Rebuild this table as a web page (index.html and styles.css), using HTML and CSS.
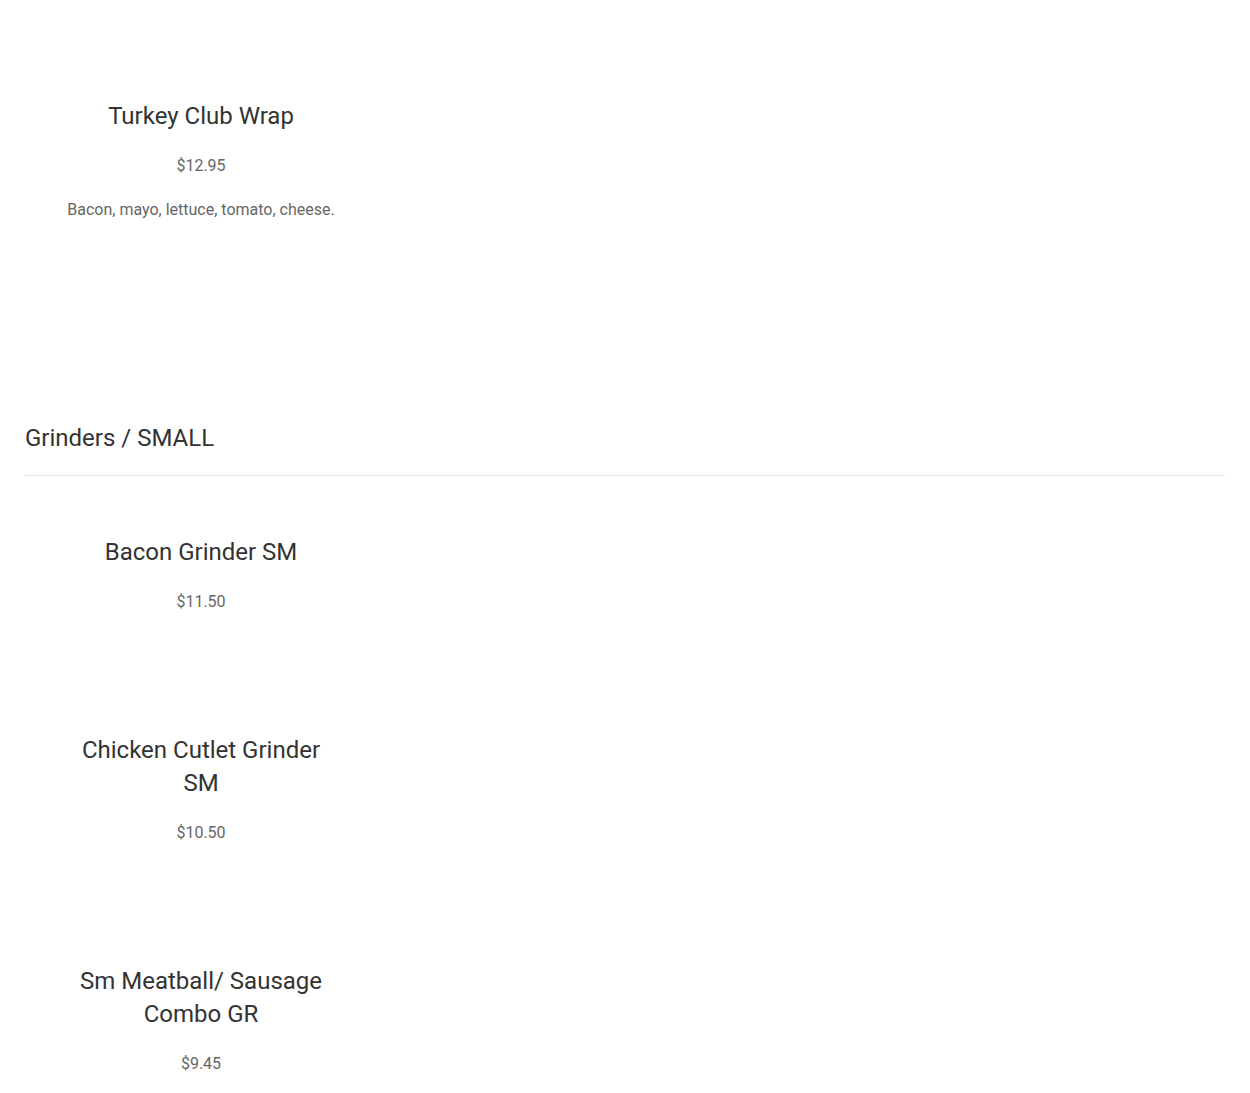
FILE: index.html
```html
<!DOCTYPE html>
<html lang="en">
<head>
  <meta charset="UTF-8">
  <meta name="viewport" content="width=device-width, initial-scale=1.0">
  <title>Menu</title>
  <link rel="stylesheet" href="styles.css">
</head>
<body>
  <div class="menu">
    <div class="section first">
      <div class="items">
        <div class="item">
          <h3 class="item-name">Turkey Club Wrap</h3>
          <div class="item-price">$12.95</div>
          <p class="item-desc">Bacon, mayo, lettuce, tomato, cheese.</p>
        </div>
      </div>
    </div>

    <div class="section">
      <h2 class="section-title">Grinders / SMALL</h2>
      <div class="items">
        <div class="item">
          <h3 class="item-name">Bacon Grinder SM</h3>
          <div class="item-price">$11.50</div>
        </div>
        <div class="item">
          <h3 class="item-name">Chicken Cutlet Grinder SM</h3>
          <div class="item-price">$10.50</div>
        </div>
        <div class="item">
          <h3 class="item-name">Sm Meatball/ Sausage Combo GR</h3>
          <div class="item-price">$9.45</div>
        </div>
      </div>
    </div>
  </div>
</body>
</html>
```

FILE: styles.css
```css
body {
  margin: 0;
  font-family: Roboto, "Liberation Sans", sans-serif;
  background-color: #fff;
  color: #333;
}
.menu {
  padding: 40px 25px 0;
}
.section {
  margin-top: 140px;
}
.section.first {
  margin-top: 0;
}
.section-title {
  margin: 0;
  padding-bottom: 20px;
  border-bottom: 1px solid #e5e5e5;
  font-size: 24px;
  font-weight: 400;
  line-height: 33px;
  color: #333;
}
.items {
  display: flex;
  flex-direction: column;
}
.item {
  width: 352px;
  box-sizing: border-box;
  padding: 60px 40px 61px;
  text-align: center;
}
.item-name {
  margin: 0 0 22px;
  font-size: 24px;
  font-weight: 400;
  line-height: 33px;
  color: #333;
}
.item-price {
  font-size: 16px;
  line-height: 22px;
  color: #666;
}
.item-desc {
  margin: 22px 0 0;
  font-size: 16px;
  line-height: 22px;
  color: #666;
}
```
